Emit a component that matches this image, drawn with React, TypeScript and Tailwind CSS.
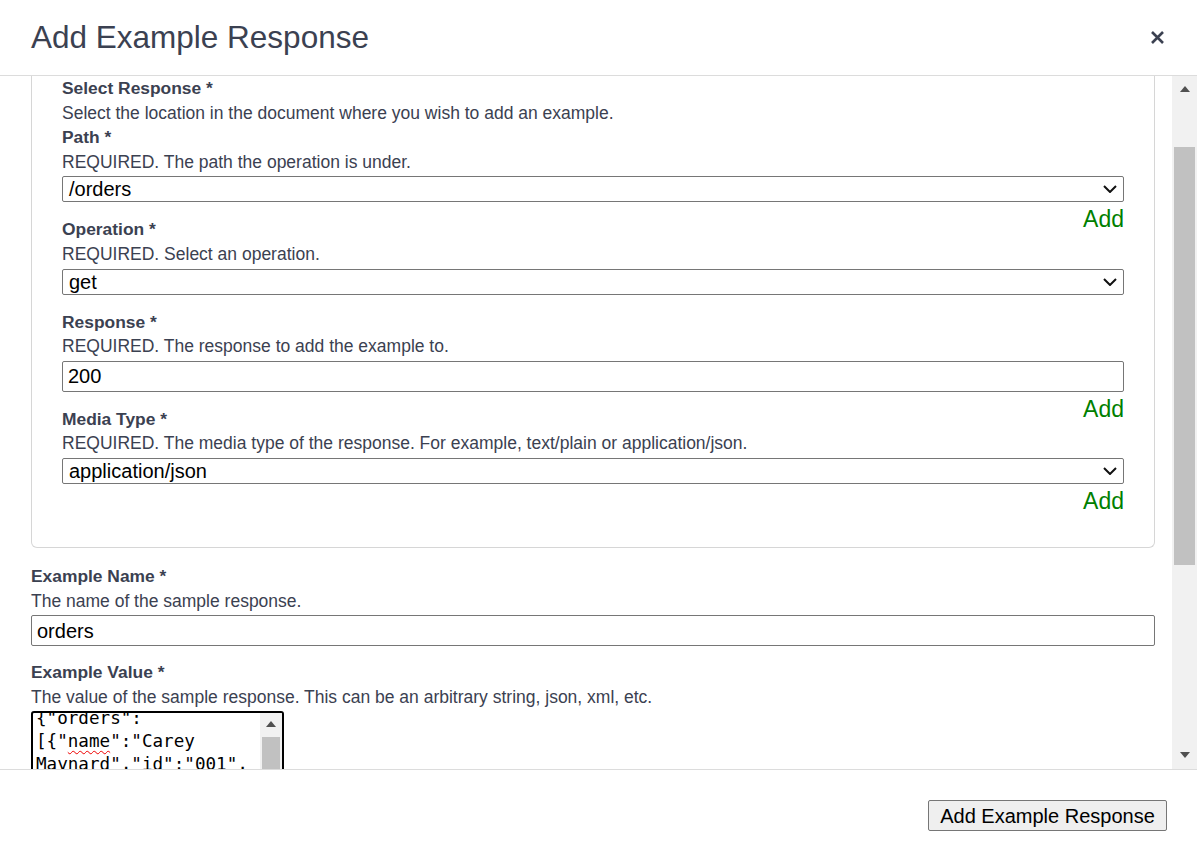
import React from "react";

const font = { fontFamily: '"Liberation Sans", Arial, sans-serif' };

function Chevron() {
  return (
    <svg width="14" height="8" viewBox="0 0 14 8" className="shrink-0">
      <path d="M1 1 L7 7 L13 1" fill="none" stroke="#111" strokeWidth="2" />
    </svg>
  );
}

function SelectBox({ value }: { value: string }) {
  return (
    <div className="mt-[2px] flex h-[26px] items-center justify-between rounded-[2px] border border-[#767676] bg-white pl-[6px] pr-[6px] text-[20px] leading-none text-black">
      <span>{value}</span>
      <Chevron />
    </div>
  );
}

function InputBox({ value }: { value: string }) {
  return (
    <div className="mt-[2px] flex h-[31px] items-center rounded-[2px] border border-[#767676] bg-white pl-[5px] text-[20px] leading-none text-black">
      {value}
    </div>
  );
}

function Label({ children }: { children: React.ReactNode }) {
  return <div className="text-[17.4px] font-bold leading-[24.6px] text-[#3b4151]">{children}</div>;
}

function Desc({ children }: { children: React.ReactNode }) {
  return <div className="text-[17.5px] leading-[24.6px] text-[#3b4151]">{children}</div>;
}

function AddLink() {
  return <div className="float-right mt-[2px] text-[23px] leading-[30px] text-[#008000]">Add</div>;
}

export default function App() {
  return (
    <div className="flex h-[849px] w-[1197px] flex-col overflow-hidden bg-white" style={font}>
      {/* Header */}
      <div className="flex h-[76px] shrink-0 items-center justify-between border-b border-[#dcdcdc] pl-[31px] pr-[33px]">
        <div className="text-[31.5px] leading-none text-[#3b4151]">Add Example Response</div>
        <svg width="13" height="13" viewBox="0 0 13 13">
          <path d="M1 1 L12 12 M12 1 L1 12" stroke="#3b4151" strokeWidth="2.6" strokeLinecap="butt" />
        </svg>
      </div>

      {/* Body */}
      <div className="flex min-h-0 flex-1">
        <div className="min-w-0 flex-1 overflow-hidden pl-[31px] pr-[17px]">
          {/* Card */}
          <div className="rounded-b-[6px] border-x border-b border-[#d6d6d6] px-[30px] pb-[31px]">
            <Label>Select Response *</Label>
            <Desc>Select the location in the document where you wish to add an example.</Desc>
            <Label>Path *</Label>
            <Desc>REQUIRED. The path the operation is under.</Desc>
            <SelectBox value="/orders" />
            <AddLink />
            <div className="mt-[15px]">
              <Label>Operation *</Label>
              <Desc>REQUIRED. Select an operation.</Desc>
              <SelectBox value="get" />
            </div>
            <div className="mt-[15px]">
              <Label>Response *</Label>
              <Desc>REQUIRED. The response to add the example to.</Desc>
              <InputBox value="200" />
              <AddLink />
            </div>
            <div className="mt-[15px]">
              <Label>Media Type *</Label>
              <Desc>REQUIRED. The media type of the response. For example, text/plain or application/json.</Desc>
              <SelectBox value="application/json" />
              <AddLink />
            </div>
            <div className="clear-both" />
          </div>

          <div className="mt-[16px]">
            <Label>Example Name *</Label>
            <Desc>The name of the sample response.</Desc>
            <InputBox value="orders" />
          </div>
          <div className="mt-[14px]">
            <Label>Example Value *</Label>
            <Desc>The value of the sample response. This can be an arbitrary string, json, xml, etc.</Desc>
            <div className="mt-[2px] flex h-[120px] w-[253px] overflow-hidden rounded-[3px] border-2 border-black bg-white">
              <div
                className="-mt-[6px] min-w-0 flex-1 whitespace-nowrap pl-[3px] text-[17.6px] leading-[23px] text-black"
                style={{ fontFamily: '"DejaVu Sans Mono", monospace' }}
              >
                <div>{'{"orders":'}</div>
                <div>
                  {'[{"'}
                  <span className="underline decoration-[#e00] decoration-wavy decoration-1 underline-offset-[3px]">name</span>
                  {'":"Carey'}
                </div>
                <div>{'Maynard","id":"001",'}</div>
              </div>
              <div className="flex w-[22px] shrink-0 flex-col items-center bg-[#f1f1f1]">
                <svg width="10" height="6" viewBox="0 0 10 6" className="mt-[8px]">
                  <path d="M0 6 L5 0 L10 6 Z" fill="#505050" />
                </svg>
                <div className="mt-[10px] h-[80px] w-[18px] bg-[#c1c1c1]" />
              </div>
            </div>
          </div>
        </div>

        {/* Scrollbar */}
        <div className="flex w-[25px] shrink-0 flex-col items-center bg-[#f1f1f1]">
          <svg width="10" height="6" viewBox="0 0 10 6" className="mt-[10px]">
            <path d="M0 6 L5 0 L10 6 Z" fill="#505050" />
          </svg>
          <div className="mt-[55px] h-[418px] w-[21px] bg-[#c1c1c1]" />
          <div className="flex-1" />
          <svg width="10" height="6" viewBox="0 0 10 6" className="mb-[11px]">
            <path d="M0 0 L10 0 L5 6 Z" fill="#505050" />
          </svg>
        </div>
      </div>

      {/* Footer */}
      <div className="flex h-[80px] shrink-0 items-start justify-end border-t border-[#dcdcdc] pr-[30px] pt-[30px]">
        <button className="h-[31px] w-[239px] rounded-[2px] border border-[#767676] bg-[#efefef] text-[20px] leading-none text-black">
          Add Example Response
        </button>
      </div>
    </div>
  );
}
